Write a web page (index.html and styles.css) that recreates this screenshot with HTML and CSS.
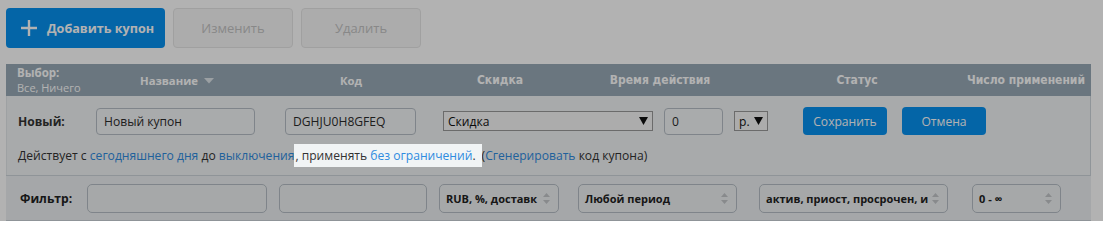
FILE: index.html
```html
<!DOCTYPE html>
<html lang="ru">
<head>
<meta charset="utf-8">
<title>Купоны</title>
<link rel="stylesheet" href="styles.css">
</head>
<body>
<div class="page">
  <div class="toolbar">
    <button class="btn btn-add">
      <svg class="plus" width="18" height="18" viewBox="0 0 18 18"><path d="M9 1v16M1 9h16" stroke="#fff" stroke-width="2.4" fill="none"/></svg>
      <span>Добавить купон</span>
    </button>
    <button class="btn btn-off">Изменить</button>
    <button class="btn btn-off">Удалить</button>
  </div>

  <div class="grid">
    <div class="thead">
      <div class="th th-select">
        <div class="sel-title">Выбор:</div>
        <div class="sel-links">Все, Ничего</div>
      </div>
      <div class="th th-wide">Название <svg class="sort" width="10" height="6" viewBox="0 0 10 6"><polygon points="0,0 10,0 5,5.5" fill="#dfe5ea"/></svg></div>
      <div class="th th-wide">Код</div>
      <div class="th th-cond">Скидка</div>
      <div class="th th-cond">Время действия</div>
      <div class="th th-cond">Статус</div>
      <div class="th th-cond th-last">Число применений</div>
    </div>

    <div class="new-row">
      <div class="new-fields">
        <div class="new-label">Новый:</div>
        <div class="input in-name">Новый купон</div>
        <div class="input in-code">DGHJU0H8GFEQ</div>
        <div class="dd dd-kind"><span>Скидка</span><svg width="9" height="8" viewBox="0 0 9 8"><polygon points="0,0 9,0 4.5,8" fill="#111"/></svg></div>
        <div class="input in-val">0</div>
        <div class="dd dd-cur"><span>р.</span><svg width="9" height="8" viewBox="0 0 9 8"><polygon points="0,0 9,0 4.5,8" fill="#111"/></svg></div>
        <button class="btn-small btn-save">Сохранить</button>
        <button class="btn-small btn-cancel">Отмена</button>
      </div>
      <div class="new-desc">Действует с <a class="lnk">сегодняшнего дня</a> до <a class="lnk">выключения</a><span class="spot">, применять <a class="lnk">без ограничений</a>.</span>(<a class="lnk">Сгенерировать</a> код купона)</div>
    </div>

    <div class="filter-row">
      <div class="filter-label">Фильтр:</div>
      <div class="finput f-name"></div>
      <div class="finput f-code"></div>
      <div class="fsel f-kind"><span>RUB, %, доставк</span><svg width="7" height="11" viewBox="0 0 7 11"><polygon points="3.5,0 7,4 0,4" fill="#c3c6c9"/><polygon points="0,7 7,7 3.5,11" fill="#c3c6c9"/></svg></div>
      <div class="fsel f-period"><span>Любой период</span><svg width="7" height="11" viewBox="0 0 7 11"><polygon points="3.5,0 7,4 0,4" fill="#c3c6c9"/><polygon points="0,7 7,7 3.5,11" fill="#c3c6c9"/></svg></div>
      <div class="fsel f-status"><span>актив, приост, просрочен, и</span><svg width="7" height="11" viewBox="0 0 7 11"><polygon points="3.5,0 7,4 0,4" fill="#c3c6c9"/><polygon points="0,7 7,7 3.5,11" fill="#c3c6c9"/></svg></div>
      <div class="fsel f-count"><span>0 - ∞</span><svg width="7" height="11" viewBox="0 0 7 11"><polygon points="3.5,0 7,4 0,4" fill="#c3c6c9"/><polygon points="0,7 7,7 3.5,11" fill="#c3c6c9"/></svg></div>
    </div>
  </div>
</div>
</body>
</html>
```
FILE: styles.css
```css
html, body {
  margin: 0;
  padding: 0;
  background: #fff;
  overflow: hidden;
}
body {
  font-family: "Open Sans", "Noto Sans", sans-serif;
  font-size: 12.1px;
  color: #333;
}
.page {
  padding: 8px 12px 0 6px;
}
.toolbar {
  display: flex;
  gap: 8px;
  height: 40px;
}
.btn {
  font-family: inherit;
  border-radius: 4px;
  height: 40px;
  box-sizing: border-box;
  font-size: 13px;
  display: flex;
  align-items: center;
  justify-content: center;
  padding: 0;
  white-space: nowrap;
}
.btn-add {
  width: 159px;
  background: #0791ef;
  border: none;
  color: #fff;
  font-weight: 700;
  font-size: 12.6px;
  gap: 9px;
  justify-content: flex-start;
  padding-left: 14px;
}
.plus { display: block; }
.btn-off {
  width: 120px;
  background: #f7f7f7;
  border: 1px solid #e6e6e6;
  color: #c3c3c3;
}
.grid {
  margin-top: 16px;
  width: 1085px;
}
.thead {
  display: grid;
  grid-template-columns: 74px 194px 154px 144px 176px 218px 125px;
  height: 32px;
  background: #99aab7;
  color: #fff;
  font-weight: 700;
  white-space: nowrap;
}
.th {
  display: flex;
  align-items: center;
  justify-content: center;
}
.th-select {
  flex-direction: column;
  align-items: flex-start;
  justify-content: center;
  padding-left: 11px;
}
.sel-title { font-size: 11.5px; line-height: 14px; }
.sel-links { font-size: 11px; font-weight: 400; line-height: 14px; margin-top: 1px; }
.th-wide { font-size: 11.3px; gap: 6px; }
.th-wide .sort { margin-top: 2px; }
.th-cond {
  font-family: "DejaVu Sans Condensed", "DejaVu Sans", sans-serif;
  font-stretch: condensed;
  font-size: 12px;
}
.th-last { justify-content: flex-end; padding-right: 6px; }

.new-row {
  background: #f1f4f5;
  border-left: 1px solid #e3e7ea;
  border-right: 1px solid #cfd6dc;
  height: 79px;
  box-sizing: border-box;
  padding-top: 11px;
}
.new-fields {
  display: flex;
  align-items: center;
  height: 28px;
}
.new-label {
  font-weight: 700;
  padding-left: 11px;
  width: 78px;
}
.input {
  height: 27px;
  box-sizing: border-box;
  border: 1px solid #b6bec6;
  border-radius: 4px;
  background: #f3f5f7;
  padding-left: 7px;
  display: flex;
  align-items: center;
  color: #2b2b2b;
}
.in-name { width: 159px; }
.in-code { width: 131px; margin-left: 30px; }
.in-val { width: 59px; margin-left: 11px; }
.dd {
  height: 20px;
  box-sizing: border-box;
  border: 1px solid #9a9a9a;
  background: #f6f6f6;
  display: flex;
  align-items: center;
  justify-content: space-between;
  padding: 0 4px 0 4px;
  color: #111;
}
.dd-kind { width: 210px; margin-left: 27px; }
.dd-cur { width: 34px; margin-left: 11px; }
.btn-small {
  height: 28px;
  width: 84px;
  border: none;
  border-radius: 4px;
  background: #0791ef;
  color: #fff;
  font-family: inherit;
  font-size: 12.1px;
  padding: 0;
}
.btn-save { margin-left: 35px; }
.btn-cancel { margin-left: 15px; }
.new-desc {
  margin-top: 12px;
  padding-left: 11px;
  line-height: 17px;
  white-space: nowrap;
}
.lnk { color: #2f8be0; }
.spot {
  position: relative;
  z-index: 5;
  background: #f1f4f5;
  padding: 3px 6px 3px 1px;
  box-shadow: 0 0 0 3000px rgba(0, 0, 0, 0.3);
}

.filter-row {
  display: flex;
  align-items: center;
  background: #edf0f2;
  border-top: 1px solid #cdd4da;
  border-bottom: 1px solid #cdd4da;
  height: 46px;
  box-sizing: border-box;
  padding-left: 14px;
  padding-top: 1px;
}
.filter-label {
  font-weight: 700;
  width: 67px;
  color: #222;
}
.finput, .fsel {
  height: 29px;
  box-sizing: border-box;
  border: 1px solid #b6bec6;
  border-radius: 5px;
  background: #eef1f3;
}
.fsel {
  display: flex;
  align-items: center;
  justify-content: space-between;
  gap: 3px;
  padding: 0 8px 0 6px;
  font-weight: 700;
  font-size: 11px;
  color: #222;
  white-space: nowrap;
}
.fsel svg { flex: none; }
.f-name { width: 180px; }
.f-code { width: 148px; margin-left: 12px; }
.f-kind { width: 120px; margin-left: 12px; }
.f-period { width: 159px; margin-left: 19px; }
.f-status { width: 189px; margin-left: 22px; }
.f-count { width: 89px; margin-left: 24px; }
```
